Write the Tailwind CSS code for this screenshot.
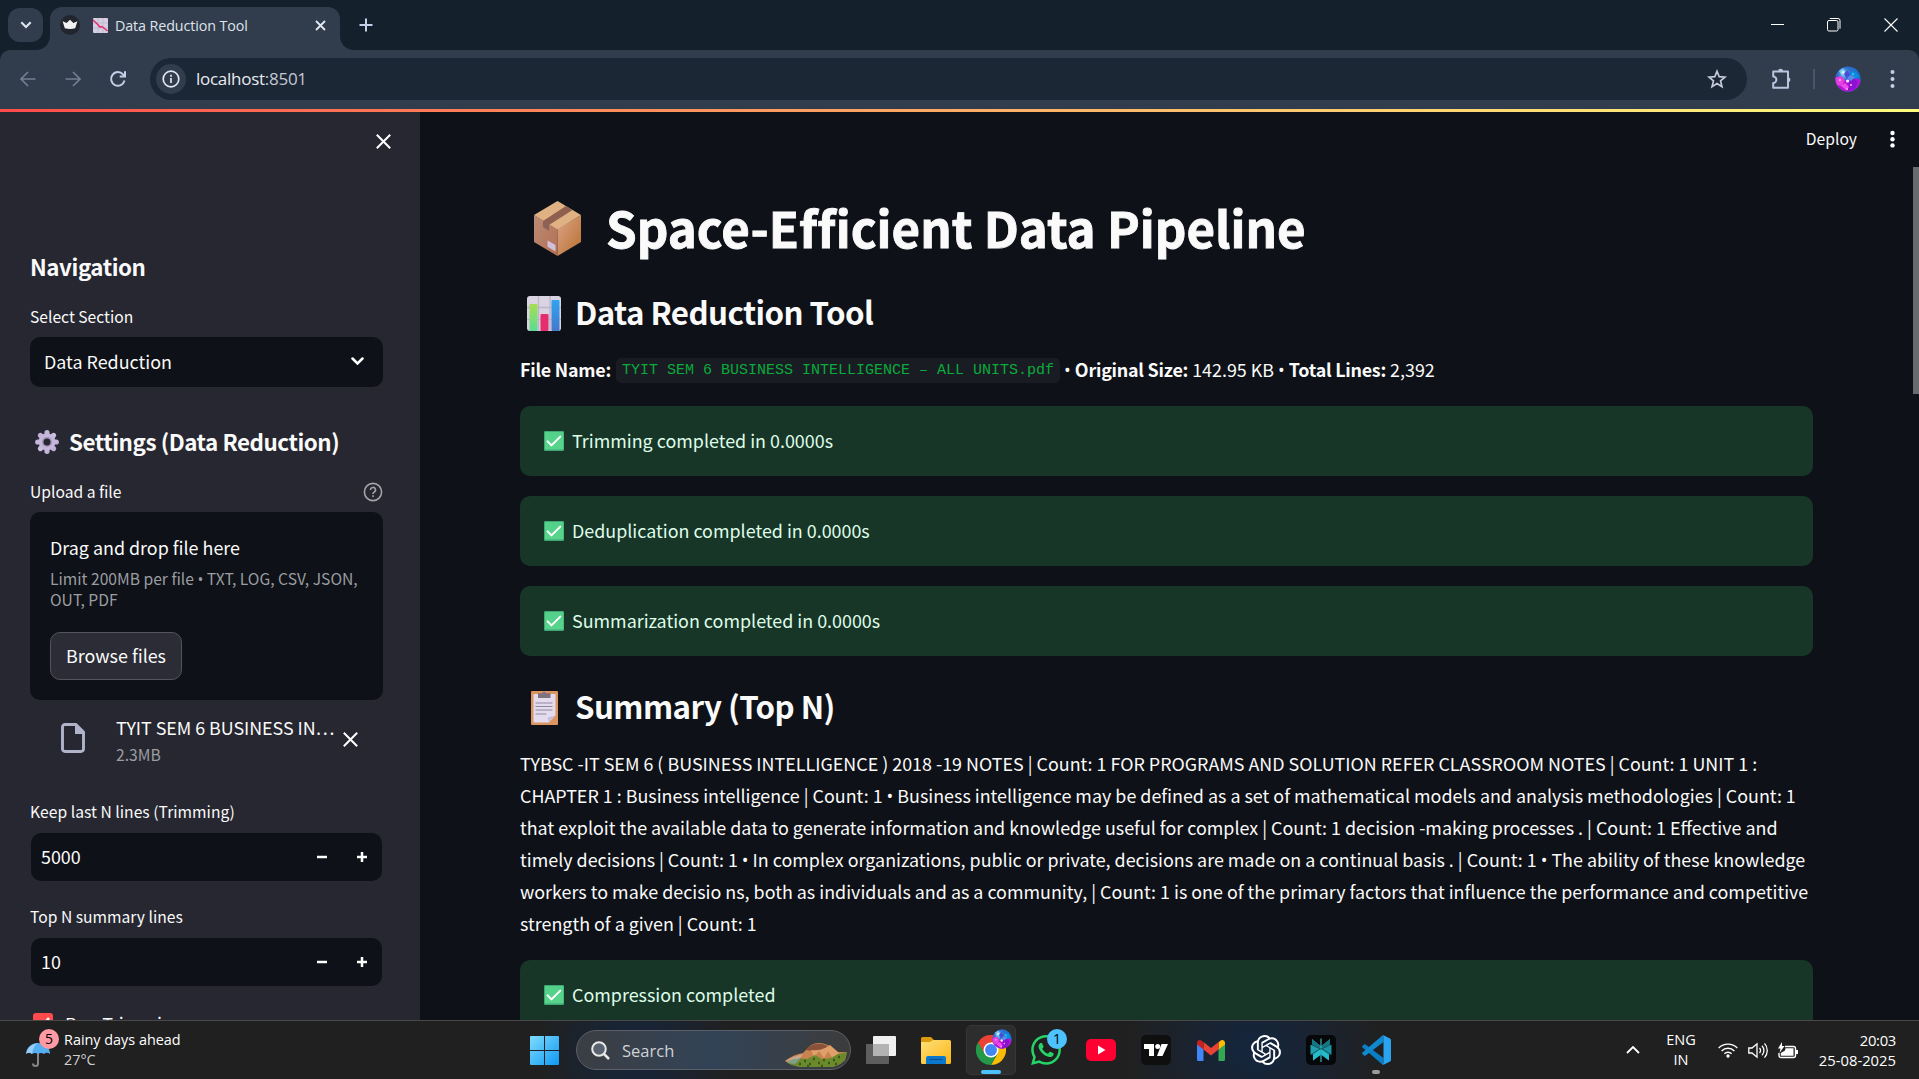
<!DOCTYPE html>
<html lang="en">
<head>
<meta charset="utf-8">
<title>Data Reduction Tool</title>
<script src="https://cdn.jsdelivr.net/npm/@tailwindcss/browser@4"></script>
</head>
<body class="w-[1919px] h-[1079px] overflow-hidden bg-[#0e1117] text-[#fafafa] font-['Noto_Sans_CJK_SC',sans-serif] flex flex-col">

<svg class="absolute w-0 h-0" aria-hidden="true">
  <defs>
    <linearGradient id="chk" x1="0" y1="0" x2="0" y2="1"><stop offset="0" stop-color="#52d08a"/><stop offset="1" stop-color="#5ad48c"/></linearGradient>
    <symbol id="check" viewBox="0 0 20 20"><rect width="20" height="20" rx="1.2" fill="#3fa876"/><rect x="1" y="1" width="18.4" height="17.6" rx=".6" fill="url(#chk)"/><path d="M3.6 10.4l3.9 4L16.3 5.6" fill="none" stroke="#fff" stroke-width="2" stroke-linecap="round" stroke-linejoin="round"/></symbol>
    <radialGradient id="avA" cx=".35" cy=".3" r=".8"><stop offset="0" stop-color="#8fd0f5"/><stop offset=".3" stop-color="#2f6fd0"/><stop offset="1" stop-color="#0a6fc8"/></radialGradient>
    <symbol id="avatar" viewBox="0 0 26 26"><clipPath id="avc"><circle cx="13" cy="13" r="12.6"/></clipPath><g clip-path="url(#avc)"><rect width="26" height="26" fill="url(#avA)"/><path d="M0 10L8 13 13 16 20 12 26 14V26H0Z" fill="#b414d8"/><path d="M0 12L6 10 10 14 7 20 2 19Z" fill="#e63fe0"/><path d="M14 15l5-3 4 4-3 7-7 2Z" fill="#8a12d0"/><path d="M16 5l5 1 3 5-5 2-4-3Z" fill="#0a8fe0"/><path d="M4 5l4-3 3 4-4 4Z" fill="#7cc8ee"/><path d="M9 8l3-4 3 4-3 5Z" fill="#4a4ad8"/><path d="M12 12l4-3 4 2-4 4Z" fill="#5a8ae8"/><path d="M6 20l4-3 4 4-3 3Z" fill="#f04ae8"/><circle cx="12.6" cy="15" r="1.6" fill="#ffe0fa"/><circle cx="8" cy="6.5" r="1.4" fill="#d8f2ff"/><circle cx="16" cy="19" r="1" fill="#ffb0f5"/><circle cx="5" cy="14" r=".9" fill="#ffc0f8"/><circle cx="12" cy="23" r="1.1" fill="#ff9af0"/><circle cx="18" cy="8" r=".8" fill="#9ae0ff"/></g></symbol>
  </defs>
</svg>

<!-- Browser tab strip -->
<header class="h-[109px] shrink-0 bg-[#15202d] flex flex-col font-['Open_Sans',sans-serif]">
  <div class="h-[50px] flex items-start">
    <div class="ml-2 mt-2 w-[35px] h-[34px] rounded-[12px] bg-[#313c4c] flex items-center justify-center">
      <svg width="12" height="8" viewBox="0 0 12 8" fill="none" stroke="#dfe5f0" stroke-width="2.1"><path d="M1.3 1.3L6 6l4.700-4.700"/></svg>
    </div>
    <div class="mt-[7px] flex items-end h-[43px]">
      <svg class="-ml-[7px]" width="14" height="14" viewBox="0 0 14 14" fill="#313c4c"><path d="M14 14H0A14 14 0 0 0 14 0Z"/></svg>
      <div class="w-[290px] h-[43px] rounded-t-[12px] bg-[#313c4c] flex items-center pb-[7px] pl-[10px] pr-[14px]">
        <svg width="20" height="20" viewBox="0 0 20 20"><circle cx="10" cy="10" r="10" fill="#23252e"/><path d="M2.600 6.200l4 1.900L10 4.700l3.400 3.400 4-1.900-2.200 7.100q-5.200 1.300-10.400 0Z" fill="#f2f2f2"/></svg>
        <svg class="ml-[13px]" width="15" height="15" viewBox="0 0 15 15"><rect width="15" height="15" rx="1" fill="#d6cfe2"/><path d="M5 0V15M10 0V15M0 5H15M0 10H15" stroke="#b9b1ca" stroke-width=".7"/><path d="M0 2l4.500 4.200L7 9l2-.5 2.500 2L14.500 13" fill="none" stroke="#e5306d" stroke-width="1.600"/></svg>
        <span class="ml-[7px] mt-px text-[14.300px] leading-5 tracking-[-0.11px] text-[#dfe3ea] whitespace-nowrap">Data Reduction Tool</span>
        <svg class="ml-auto" width="11" height="11" viewBox="0 0 11 11" stroke="#e3e7ef" stroke-width="1.800"><path d="M1 1l9 9M10 1l-9 9"/></svg>
      </div>
      <svg width="14" height="14" viewBox="0 0 14 14" fill="#313c4c"><path d="M0 14H14A14 14 0 0 1 0 0Z"/></svg>
    </div>
    <svg class="ml-[5px] mt-[18px]" width="14" height="14" viewBox="0 0 14 14" stroke="#c5d0e8" stroke-width="2"><path d="M7 .5v13M.5 7h13"/></svg>
    <div class="ml-auto mr-[21px] mt-[18px] flex items-center gap-[43px]">
      <svg width="13" height="14" viewBox="0 0 13 14"><path d="M0 6.500h13" stroke="#fff" stroke-width="1"/></svg>
      <svg width="14" height="14" viewBox="0 0 14 14" fill="none" stroke="#fff" stroke-width="1"><rect x=".5" y="2.500" width="10.500" height="10.500" rx="1.500"/><path d="M2.800.5H11a2 2 0 0 1 2 2v8.200"/></svg>
      <svg width="14" height="14" viewBox="0 0 14 14" stroke="#fff" stroke-width="1.100"><path d="M.5.5l13 13M13.500.5l-13 13"/></svg>
    </div>
  </div>

  <!-- Toolbar -->
  <div class="h-[59px] bg-[#313c4c] rounded-t-[10px] flex items-center pl-5 pb-px">
    <svg width="16" height="16" viewBox="0 0 16 16" fill="none" stroke="#737e90" stroke-width="1.700"><path d="M15.500 8H1.500M8 1L1 8l7 7"/></svg>
    <svg class="ml-[29px]" width="16" height="16" viewBox="0 0 16 16" fill="none" stroke="#737e90" stroke-width="1.700"><path d="M.5 8h14M8 1l7 7-7 7"/></svg>
    <svg class="ml-[28px]" width="18" height="18" viewBox="0 0 18 18" fill="none" stroke="#c5d0e8" stroke-width="2"><path d="M15.500 10.500A6.800 6.800 0 1 1 14 4.400l2 2"/><path d="M16 1.200v5.300h-5.300"/></svg>
    <div class="ml-[23px] w-[1597px] h-[42px] rounded-full bg-[#1c2736] flex items-center pl-[6px] pr-[20px]">
      <div class="size-[30px] rounded-full bg-[#313c4c] flex items-center justify-center">
        <svg width="18" height="18" viewBox="0 0 18 18" fill="none" stroke="#e3e7f0" stroke-width="1.700"><circle cx="9" cy="9" r="7.800"/><path d="M9 8v5M9 4.800v1.900"/></svg>
      </div>
      <span class="ml-[10px] text-[17px] leading-6 tracking-[-0.27px] text-[#e8ebf0] whitespace-nowrap">localhost<span class="text-[#c3c9d3]">:8501</span></span>
      <svg class="ml-auto" width="20" height="20" viewBox="0 0 20 20" fill="none" stroke="#c7ccd8" stroke-width="1.700"><path d="M10 2.300l2.200 5.400 5.800.45-4.450 3.750 1.400 5.700L10 14.500l-4.950 3.100 1.400-5.700L2 8.150l5.800-.45Z"/></svg>
    </div>
    <svg class="ml-[24px]" width="22" height="22" viewBox="0 0 22 22" fill="none" stroke="#b9c5de" stroke-width="2"><path d="M2.200 3.500H17V19.800H2.200V15a3.200 3.200 0 0 0 0-6.400Z" stroke-linejoin="round"/><path d="M7 3.300a2.600 2.600 0 0 1 5.200 0ZM17 9.200a2.500 2.500 0 0 1 0 5Z" fill="#b9c5de" stroke="none"/></svg>
    <div class="ml-[20px] w-[2px] h-5 bg-[#4a5568]"></div>
    <svg class="ml-5" width="26" height="26"><use href="#avatar"/></svg>
    <svg class="ml-[29px]" width="5" height="18" viewBox="0 0 5 18" fill="#c5d0e8"><circle cx="2.500" cy="2" r="2"/><circle cx="2.500" cy="9" r="2"/><circle cx="2.500" cy="16" r="2"/></svg>
  </div>
</header>

<div class="h-[3px] shrink-0 bg-linear-to-r from-[#ff4b4b] to-[#fffd80]"></div>

<div class="h-[908px] shrink-0 flex overflow-hidden relative">
  <!-- Sidebar -->
  <aside class="w-[420px] shrink-0 h-full bg-[#262730] flex flex-col overflow-hidden px-[30px] [&>*]:shrink-0">
    <div class="h-[58px] flex items-center justify-end -mr-px">
      <svg width="15" height="15" viewBox="0 0 15 15" stroke="#fff" stroke-width="2"><path d="M.8.8l13.400 13.400M14.200.8L.8 14.200"/></svg>
    </div>
    <h2 class="mt-[81px] h-[30px] leading-[30px] text-[22.400px] font-bold tracking-[-0.45px]">Navigation</h2>
    <div class="mt-[24px] h-6 leading-6 text-[15.650px]">Select Section</div>
    <div class="mt-[8px] w-[353px] h-[50px] rounded-[10px] bg-[#0e1117] flex items-center pl-[14px] pr-[19px] pb-[2px] text-[17.900px]">
      <span>Data Reduction</span>
      <svg class="ml-auto" width="13" height="9" viewBox="0 0 13 9" fill="none" stroke="#fff" stroke-width="2.500" stroke-linecap="round"><path d="M1.500 1.500l5 5 5-5"/></svg>
    </div>
    <h2 class="mt-[39px] h-[30px] leading-[30px] text-[22.400px] font-bold flex items-center pl-[5px] tracking-[-0.45px] whitespace-nowrap">
      <svg class="mr-[10px] mt-[2px]" width="24" height="24" viewBox="0 0 24 24"><defs><linearGradient id="gr" gradientUnits="userSpaceOnUse" x1="0" y1="0" x2="24" y2="24"><stop offset="0" stop-color="#b9a6cc"/><stop offset=".5" stop-color="#cdbfe0"/><stop offset="1" stop-color="#b5a4d2"/></linearGradient></defs><g stroke="url(#gr)" stroke-width="5.200" stroke-linecap="round"><path d="M12 2.700V21.299M2.700 12H21.300M5.400 5.400l13.200 13.200M18.600 5.400L5.400 18.600"/></g><circle cx="12" cy="12" r="8.400" fill="#c5b6da"/><circle cx="12" cy="12" r="5" fill="#a493b8"/><circle cx="12" cy="12" r="3.500" fill="#262730"/></svg>
      <span>Settings (Data Reduction)</span>
    </h2>
    <div class="mt-6 w-[353px] h-6 leading-6 text-[15.650px] flex items-center justify-between">
      <span>Upload a file</span>
      <svg width="20" height="20" viewBox="0 0 20 20" fill="none" stroke="#a3a4a8" stroke-width="1.600"><circle cx="10" cy="10" r="8.600"/><path d="M7.500 7.900a2.500 2.500 0 1 1 3.700 2.200c-.8.5-1.200.9-1.200 1.800M10 13.300v1.700"/></svg>
    </div>
    <div class="mt-2 w-[353px] h-[188px] rounded-[10px] bg-[#0e1117] pt-[23px] px-5">
      <div class="h-6 leading-6 text-[17.900px]">Drag and drop file here</div>
      <div class="mt-[9px] leading-[21px] text-[15.650px] text-[#9b9da1] whitespace-nowrap">Limit 200MB per file <span class="font-['Open_Sans'] leading-none">•</span> TXT, LOG, CSV, JSON,<br>OUT, PDF</div>
      <button class="mt-[22px] w-[132px] h-[48px] rounded-[10px] border border-[#52535b] bg-[#2b2c36] text-[17.900px] leading-6 whitespace-nowrap flex items-center justify-center pb-[2px]">Browse files</button>
    </div>
    <div class="mt-[15px] h-[52px] flex items-start pl-[31px]">
      <svg class="mt-2" width="24" height="30" viewBox="0 0 24 30" fill="none"><path d="M14.500 1.500H4a2.500 2.500 0 0 0-2.500 2.500V26A2.500 2.500 0 0 0 4 28.500H20A2.500 2.500 0 0 0 22.500 26V9.500" stroke="#b0b3c9" stroke-width="2.900"/><path d="M14 0h1.500L24 8.500V11H14Z" fill="#b0b3c9"/></svg>
      <div class="ml-[31px] w-[222px] whitespace-nowrap">
        <div class="h-6 leading-6 text-[17.900px] tracking-[-0.05px]">TYIT SEM 6 BUSINESS IN…</div>
        <div class="mt-[4px] h-6 leading-6 text-[15.650px] text-[#9b9da1]">2.3MB</div>
      </div>
      <svg class="ml-[5px] mt-[17px]" width="15" height="15" viewBox="0 0 15 15" stroke="#fff" stroke-width="2"><path d="M.8.8l13.400 13.400M14.200.8L.8 14.200"/></svg>
    </div>
    <div class="mt-[33px] h-6 leading-6 text-[15.650px] tracking-[0.03px]">Keep last N lines (Trimming)</div>
    <div class="mt-[9px] ml-px w-[351px] h-[48px] rounded-[10px] bg-[#0e1117] flex items-center pl-[10px] pr-[15px] text-[17.900px]">
      <span class="-mt-[2px]">5000</span>
      <svg class="ml-auto" width="10" height="10" viewBox="0 0 10 10"><path d="M0 5h10" stroke="#fff" stroke-width="2.500"/></svg>
      <svg class="ml-[30px]" width="10" height="10" viewBox="0 0 10 10"><path d="M0 5h10M5 0v10" stroke="#fff" stroke-width="2.500"/></svg>
    </div>
    <div class="mt-6 h-6 leading-6 text-[15.650px]">Top N summary lines</div>
    <div class="mt-[9px] ml-px w-[351px] h-[48px] rounded-[10px] bg-[#0e1117] flex items-center pl-[10px] pr-[15px] text-[17.900px]">
      <span class="-mt-[2px]">10</span>
      <svg class="ml-auto" width="10" height="10" viewBox="0 0 10 10"><path d="M0 5h10" stroke="#fff" stroke-width="2.500"/></svg>
      <svg class="ml-[30px]" width="10" height="10" viewBox="0 0 10 10"><path d="M0 5h10M5 0v10" stroke="#fff" stroke-width="2.500"/></svg>
    </div>
    <div class="mt-[27px] h-5 flex items-center pl-[3px] text-[17.900px]">
      <div class="size-5 rounded-[3px] bg-[#ff4b4b] flex items-center justify-center"><svg width="14" height="12" viewBox="0 0 14 12" fill="none" stroke="#fff" stroke-width="2.500"><path d="M1 6l4 4L13 1"/></svg></div>
      <span class="ml-3">Run Trimming</span>
    </div>
  </aside>

  <!-- Main -->
  <main class="flex-1 h-full overflow-hidden flex flex-col [&>*]:shrink-0">
    <div class="h-[55px] flex items-center justify-end pr-[24px] pb-px">
      <span class="text-[15.650px] leading-6">Deploy</span>
      <svg class="ml-[33px]" width="5" height="18" viewBox="0 0 5 18" fill="#fff"><circle cx="2.500" cy="3" r="2.200"/><circle cx="2.500" cy="9.200" r="2.200"/><circle cx="2.500" cy="15.400" r="2.200"/></svg>
    </div>
    <div class="pl-[100px] w-[1393px] flex flex-col [&>*]:shrink-0">
      <h1 class="mt-[30px] h-[60px] pl-[14px] flex items-center text-[49.200px] leading-[60px] font-bold whitespace-nowrap">
        <svg class="mr-[25px] mt-[3px]" width="47" height="55" viewBox="0 0 47 55"><defs><linearGradient id="bxl" x1="0" y1="0" x2="1" y2="1"><stop offset="0" stop-color="#b98c76"/><stop offset="1" stop-color="#b66f52"/></linearGradient><linearGradient id="bxr" x1="0" y1="0" x2="1" y2="1"><stop offset="0" stop-color="#dca488"/><stop offset="1" stop-color="#b87030"/></linearGradient></defs><path d="M0 14L23.500 28V55L0 41Z" fill="url(#bxl)"/><path d="M47 14L23.500 28V55L47 41Z" fill="url(#bxr)"/><path d="M23.500 0L47 14 23.500 28.500 0 14Z" fill="#dfb183"/><path d="M32 5L38.500 9 15 24 9 20Z" fill="#8f604f"/><path d="M9 20l6 3.700v6L9 26Z" fill="#8b6258"/><path d="M13.500 39.500l8 4.500v6.500l-8-4.700Z" fill="#cfc0dc"/></svg>
        <span class="[-webkit-text-stroke:0.9px_#fafafa] tracking-[0.03px]">Space-Efficient Data Pipeline</span>
      </h1>
      <h2 class="mt-[34px] h-[42px] pl-[7px] flex items-center text-[31.300px] leading-[42px] font-bold tracking-[-0.57px] whitespace-nowrap">
        <svg class="mr-[14px] mt-[2px]" width="34" height="35" viewBox="0 0 34 35"><defs><linearGradient id="b1" x1="0" y1="0" x2="0" y2="1"><stop offset="0" stop-color="#a6dd54"/><stop offset="1" stop-color="#5bdc92"/></linearGradient><linearGradient id="b3" x1="0" y1="0" x2="0" y2="1"><stop offset="0" stop-color="#30a4f2"/><stop offset="1" stop-color="#4478cc"/></linearGradient></defs><rect width="34" height="35" rx="3" fill="#d9d3e2"/><path d="M11.500 0V35M23 0V35M0 11.500H34M0 23.500H34" stroke="#bdb7c8" stroke-width="1.400"/><rect x="2.500" y="8" width="8" height="27" rx="1" fill="url(#b1)"/><rect x="13.500" y="18" width="8" height="17" rx="1" fill="#e62e6e"/><rect x="24.500" y="4" width="8" height="31" rx="1" fill="url(#b3)"/></svg>
        <span>Data Reduction Tool</span>
      </h2>
      <p class="mt-[20px] h-8 leading-8 text-[17.900px] whitespace-nowrap flex items-center"><b class="font-bold tracking-[-0.24px]">File Name:</b><code class="ml-[5px] mt-[3px] h-[25px] leading-[25px] px-[6px] rounded-[5px] bg-[#1a1c24] text-[#09ab3b] text-[15px] font-['Liberation_Mono',monospace]">TYIT SEM 6 BUSINESS INTELLIGENCE – ALL UNITS.pdf</code><span class="ml-1"><span class="font-['Open_Sans'] leading-none">•</span> <b class="font-bold tracking-[-0.24px]">Original Size:</b> 142.95 KB <span class="font-['Open_Sans'] leading-none">•</span> <b class="font-bold tracking-[-0.24px]">Total Lines:</b> 2,392</span></p>
      <div class="mt-[21px] flex flex-col gap-5 text-[17.900px] text-[#dffde9]">
        <div class="h-[70px] rounded-[10px] bg-[#183627] flex items-center pl-6"><svg class="mr-2" width="20" height="20"><use href="#check"/></svg><span class="-mt-[2px]">Trimming completed in 0.0000s</span></div>
        <div class="h-[70px] rounded-[10px] bg-[#183627] flex items-center pl-6"><svg class="mr-2" width="20" height="20"><use href="#check"/></svg><span class="-mt-[2px]">Deduplication completed in 0.0000s</span></div>
        <div class="h-[70px] rounded-[10px] bg-[#183627] flex items-center pl-6"><svg class="mr-2" width="20" height="20"><use href="#check"/></svg><span class="-mt-[2px]">Summarization completed in 0.0000s</span></div>
      </div>
      <h2 class="mt-[29px] h-[42px] pl-[11px] flex items-center text-[31.300px] leading-[42px] font-bold tracking-[-0.57px] whitespace-nowrap">
        <svg class="mr-[17px] mt-[2px]" width="27" height="35" viewBox="0 0 27 35"><rect y="1" width="27" height="34" rx="1" fill="#dc955f"/><path d="M2.500 4H24.500V25L18 32.500H2.500Z" fill="#e3dcee"/><path d="M24.500 25.500L18 32.500 16.500 27.500Z" fill="#c9bdd8"/><path d="M7 3.200h4.300a2 2 0 0 1 3.800 0H19.500V8H7Z" fill="#82727d"/><path d="M4.500 13h17M4.500 16.500h17M4.500 20h17M4.500 24h11" stroke="#94889f" stroke-width="1.100"/></svg>
        <span>Summary (Top N)</span>
      </h2>
      <p class="mt-[20px] h-[192px] leading-8 text-[17.900px] whitespace-nowrap">TYBSC -IT SEM 6 ( BUSINESS INTELLIGENCE ) 2018 -19 NOTES | Count: 1 FOR PROGRAMS AND SOLUTION REFER CLASSROOM NOTES | Count: 1 UNIT 1 :<br>CHAPTER 1 : Business intelligence | Count: 1 <span class="font-['Open_Sans'] leading-none">•</span> Business intelligence may be defined as a set of mathematical models and analysis methodologies | Count: 1<br>that exploit the available data to generate information and knowledge useful for complex | Count: 1 decision -making processes . | Count: 1 Effective and<br>timely decisions | Count: 1 <span class="font-['Open_Sans'] leading-none">•</span> In complex organizations, public or private, decisions are made on a continual basis . | Count: 1 <span class="font-['Open_Sans'] leading-none">•</span> The ability of these knowledge<br>workers to make decisio ns, both as individuals and as a community, | Count: 1 is one of the primary factors that influence the performance and competitive<br>strength of a given | Count: 1</p>
      <div class="mt-[21px] h-[70px] rounded-[10px] bg-[#183627] flex items-center pl-6 text-[17.900px] text-[#dffde9]"><svg class="mr-2" width="20" height="20"><use href="#check"/></svg><span class="-mt-[2px]">Compression completed</span></div>
    </div>
  </main>
  <div class="absolute right-0 top-[55px] w-[6px] h-[227px] bg-[#6a6b6f]"></div>
</div>

<!-- Taskbar -->
<footer class="h-[59px] shrink-0 border-t border-[#484848] flex items-center font-['Open_Sans',sans-serif] text-white bg-[radial-gradient(ellipse_100px_90px_at_635px_30px,#15263d,transparent),radial-gradient(ellipse_130px_110px_at_1255px_30px,#14263f,transparent)] bg-[#202020]">
  <div class="w-[520px] flex items-center pl-[26px]">
    <div class="relative w-[34px] h-[38px]">
      <svg class="absolute left-0 top-[11px]" width="24" height="25" viewBox="0 0 24 25"><path d="M12 9V21.500a2.500 2.500 0 0 1-5 0" fill="none" stroke="#8a8584" stroke-width="2"/><path d="M0 12A12 11 0 0 1 24 12Q21 9.500 18 12 15 10 12 12 9 10 6 12 3 9.500 0 12Z" fill="#55aef0"/><path d="M6 12Q7 4 12 1 6 2 2.500 6L0 12Q3 9.500 6 12Z" fill="#9ccdf8"/></svg>
      <div class="absolute left-[13px] -top-[2px] size-5 rounded-full bg-[#ff99a4] text-black text-[14px] leading-5 text-center">5</div>
    </div>
    <div class="ml-1 text-[14.400px] leading-5 whitespace-nowrap"><div>Rainy days ahead</div><div class="text-[#cfcfcf]">27°C</div></div>
  </div>

  <div class="flex items-center h-[50px]">
    <div class="w-[50px] flex justify-center pr-px">
      <svg width="29" height="29" viewBox="0 0 29 29"><defs><linearGradient id="wn" x1="0" y1="0" x2="29" y2="29" gradientUnits="userSpaceOnUse"><stop offset="0" stop-color="#7fdcfb"/><stop offset="1" stop-color="#0f98f5"/></linearGradient></defs><path d="M0 1a1 1 0 0 1 1-1H14V14H0ZM15 0H28a1 1 0 0 1 1 1V14H15ZM0 15H14V29H1a1 1 0 0 1-1-1ZM15 15H29V28a1 1 0 0 1-1 1H15Z" fill="url(#wn)"/></svg>
    </div>
    <div class="ml-[6px] w-[275px] h-[40px] rounded-full border border-[#5a5f68] bg-linear-to-r from-[#3b3e43] via-[#324357] to-[#3c3c3c] flex items-center pl-[14px] pr-[3px]">
      <svg width="19" height="19" viewBox="0 0 19 19" fill="none" stroke="#e8e8e8" stroke-width="2"><circle cx="8" cy="8" r="6.800" fill="#59636f"/><path d="M13 13l5 5" stroke-width="2.500"/></svg>
      <span class="ml-[12px] mt-px text-[16.500px] leading-6 text-[#cfd2d6]">Search</span>
      <svg class="ml-auto mt-[9px]" width="62" height="26" viewBox="0 0 62 26"><path d="M0 19Q9 12 18 11L26 3Q33-1 43 3L53 10H62L60 18Q53 25 45 25H17Q6 24 0 19Z" fill="#c98350"/><path d="M23 5Q32-1 43 4L40 8Q30 10 21 8Z" fill="#8a5238"/><path d="M26 8Q34 9 40 6L45 3 54 11 48 17 43 9 39 16 34 9 29 15Z" fill="#e0a06a"/><path d="M0 19Q9 14 18 12L14 18Z" fill="#c9a890"/><path d="M3 21Q12 15 22 17L30 13 37 17 46 16 53 12 62 10 60 18Q53 25 45 25H17Q8 24 3 21Z" fill="#6c8a2c"/><path d="M2 20Q8 16 15 17L10 22Q5 22 2 20Z" fill="#7fa088"/><path d="M14 22h2M19 19h2M24 22h2M28 17h2M33 21h2M38 18h2M43 21h2M48 18h2M53 15h2M36 24h2M22 24h2M50 22h2" stroke="#37591b" stroke-width="2.500"/></svg>
    </div>
  </div>
  <div class="ml-[5px] flex items-center gap-[5px] h-[50px]">
    <div class="w-[50px] flex justify-center"><svg width="30" height="28" viewBox="0 0 30 28"><rect y="8" width="23" height="20" rx="1" fill="#5e5e5e"/><rect x="7" width="23" height="20" rx="1" fill="#f0f0f0"/><rect x="7" y="8" width="16" height="12" fill="#b3b3b3"/></svg></div>
    <div class="w-[50px] flex justify-center"><svg width="30" height="27" viewBox="0 0 30 27"><defs><linearGradient id="fd" x1="0" y1="0" x2="1" y2="1"><stop offset="0" stop-color="#ffe07a"/><stop offset="1" stop-color="#fbb614"/></linearGradient></defs><path d="M0 1.500A1.500 1.500 0 0 1 1.500 0H10l3 3H28V10H0Z" fill="#dd9a0c"/><path d="M0 5H9l3-2H28.500A1.500 1.500 0 0 1 30 4.500V25.500A1.500 1.500 0 0 1 28.500 27H1.500A1.500 1.500 0 0 1 0 25.500Z" fill="url(#fd)"/><path d="M5 27V21a2 2 0 0 1 2-2H23a2 2 0 0 1 2 2v6Z" fill="#0b78cf"/><path d="M8.500 22.500h13" stroke="#0a4f90" stroke-width="1.200"/></svg></div>
    <div class="relative w-[50px] h-[50px] rounded-[5px] bg-[#2d2d2d] border border-[#363636] flex items-center justify-center">
      <svg width="30" height="30" viewBox="0 0 48 48"><path d="M24 24L3.200 12A24 24 0 0 1 44.800 12Z" fill="#ea4335"/><path d="M24 0A24 24 0 0 1 44.800 12H24Z" fill="#ea4335"/><path d="M44.800 12A24 24 0 0 1 24 48L34.400 30 24 12Z" fill="#fbbc05"/><path d="M3.200 12A24 24 0 0 0 24 48L34.400 30 13.600 30Z" fill="#249a49"/><path d="M24 12H44.800L34.400 30Z" fill="#fbbc05"/><path d="M3.200 12L13.600 30 24 12Z" fill="#ea4335"/><path d="M3.200 12A24 24 0 0 0 10 43L16 33 13.600 30Z" fill="#249a49"/><circle cx="24" cy="24" r="12" fill="#fff"/><circle cx="24" cy="24" r="9.500" fill="#4285f4"/></svg>
      <svg class="absolute left-[25px] top-[3px]" width="20" height="20"><use href="#avatar"/></svg>
      <div class="absolute left-[14px] top-[44px] w-5 h-1 rounded-full bg-[#4cc2ff]"></div>
    </div>
    <div class="relative w-[50px] flex justify-center">
      <svg width="30" height="30" viewBox="0 0 24 24" fill="#25d366"><path d="M17.472 14.382c-.297-.149-1.758-.867-2.030-.967-.273-.099-.471-.148-.67.15-.197.297-.767.966-.94 1.164-.173.199-.347.223-.644.075-.297-.15-1.255-.463-2.390-1.475-.883-.788-1.480-1.761-1.653-2.059-.173-.297-.018-.458.13-.606.134-.133.298-.347.446-.52.149-.174.198-.298.298-.497.099-.198.05-.371-.025-.52-.075-.149-.669-1.612-.916-2.207-.242-.579-.487-.5-.669-.51-.173-.008-.371-.01-.57-.01-.198 0-.52.074-.792.372-.272.297-1.040 1.016-1.040 2.479 0 1.462 1.065 2.875 1.213 3.074.149.198 2.096 3.200 5.077 4.487.709.306 1.262.489 1.694.625.712.227 1.360.195 1.871.118.571-.085 1.758-.719 2.006-1.413.248-.694.248-1.289.173-1.413-.074-.124-.272-.198-.57-.347m-5.421 7.403h-.004a9.870 9.870 0 0 1-5.031-1.378l-.361-.214-3.741.982.998-3.648-.235-.374a9.860 9.860 0 0 1-1.510-5.260c.001-5.450 4.436-9.884 9.888-9.884 2.640 0 5.122 1.030 6.988 2.898a9.825 9.825 0 0 1 2.893 6.994c-.003 5.450-4.437 9.884-9.885 9.884m8.413-18.297A11.815 11.815 0 0 0 12.050 0C5.495 0 .16 5.335.157 11.892c0 2.096.547 4.142 1.588 5.945L.057 24l6.305-1.654a11.882 11.882 0 0 0 5.683 1.448h.005c6.554 0 11.890-5.335 11.893-11.893a11.821 11.821 0 0 0-3.480-8.413z"/></svg>
      <div class="absolute left-[26px] -top-[6px] size-5 rounded-full bg-[#4cc2ff] text-black text-[14px] leading-5 text-center">1</div>
    </div>
    <div class="w-[50px] flex justify-center"><svg width="30" height="22" viewBox="0 0 30 22"><rect width="30" height="22" rx="5" fill="#ff0033"/><path d="M12 6.500l7.500 4.500-7.500 4.500Z" fill="#fff"/></svg></div>
    <div class="w-[50px] flex justify-center"><svg width="30" height="30" viewBox="0 0 30 30"><rect width="30" height="30" rx="5" fill="#0f0f0f"/><path d="M3 9H13V21H8V14H3ZM20.500 9H27L21.500 21H16Z" fill="#fff"/><circle cx="16.700" cy="11.500" r="2.500" fill="#fff"/></svg></div>
    <div class="w-[50px] flex justify-center"><svg width="28" height="21" viewBox="0 0 28 21"><path d="M0 3V19.500A1.500 1.500 0 0 0 1.500 21H6.500V8Z" fill="#4285f4"/><path d="M28 3V19.500A1.500 1.500 0 0 1 26.500 21H21.500V8Z" fill="#34a853"/><path d="M21.500 2.500V9.500L28 4.500V3C28 .2 25-.8 23 .9Z" fill="#fbbc04"/><path d="M6.500 9.500V2L14 8l7.500-6V9.500L14 15.500Z" fill="#ea4335"/><path d="M0 3V4.500L6.500 9.500V2.500L5 .9C3-.8 0 .2 0 3Z" fill="#c5221f"/></svg></div>
    <div class="w-[50px] flex justify-center"><svg width="30" height="30" viewBox="0 0 24 24" fill="#fff"><path d="M22.2819 9.8211a5.9847 5.9847 0 0 0-.5157-4.9108 6.0462 6.0462 0 0 0-6.5098-2.900A6.0651 6.0651 0 0 0 4.9807 4.1818a5.9847 5.9847 0 0 0-3.9977 2.900 6.0462 6.0462 0 0 0 .7427 7.0966 5.980 5.980 0 0 0 .511 4.9107 6.051 6.051 0 0 0 6.5146 2.9001A5.9847 5.9847 0 0 0 13.2599 24a6.0557 6.0557 0 0 0 5.7718-4.2058 5.9894 5.9894 0 0 0 3.9977-2.9001 6.0557 6.0557 0 0 0-.7475-7.0729zm-9.022 12.6081a4.4755 4.4755 0 0 1-2.8764-1.0408l.1419-.0804 4.7783-2.7582a.7948.7948 0 0 0 .3927-.6813v-6.7369l2.020 1.1686a.071.071 0 0 1 .038.052v5.5826a4.504 4.504 0 0 1-4.4945 4.4944zm-9.6607-4.1254a4.4708 4.4708 0 0 1-.5346-3.0137l.142.0852 4.783 2.7582a.7712.7712 0 0 0 .7806 0l5.8428-3.3685v2.3324a.0804.0804 0 0 1-.0332.0615L9.740 19.9502a4.4992 4.4992 0 0 1-6.1408-1.6464zM2.3408 7.8956a4.485 4.485 0 0 1 2.3655-1.9728V11.600a.7664.7664 0 0 0 .3879.6765l5.8144 3.3543-2.0201 1.1685a.0757.0757 0 0 1-.071 0l-4.8303-2.7865A4.504 4.504 0 0 1 2.3408 7.872zm16.5963 3.8558L13.1038 8.364 15.1192 7.200a.0757.0757 0 0 1 .071 0l4.8303 2.7913a4.4944 4.4944 0 0 1-.6765 8.1042v-5.6772a.79.79 0 0 0-.407-.667zm2.0107-3.0231l-.142-.0852-4.7735-2.7818a.7759.7759 0 0 0-.7854 0L9.409 9.2297V6.8974a.0662.0662 0 0 1 .0284-.0615l4.8303-2.7866a4.4992 4.4992 0 0 1 6.6802 4.660zM8.3065 12.863l-2.020-1.1638a.0804.0804 0 0 1-.038-.0567V6.0742a4.4992 4.4992 0 0 1 7.3757-3.4537l-.142.0805L8.704 5.459a.7948.7948 0 0 0-.3927.6813zm1.0976-2.3654l2.602-1.4998 2.6069 1.4998v2.9994l-2.5974 1.4997-2.6067-1.4997Z"/></svg></div>
    <div class="w-[50px] flex justify-center"><svg width="30" height="30" viewBox="0 0 30 30"><rect width="30" height="30" rx="5" fill="#050708"/><path d="M6 4L14.600 11V19.500L7 25.500V19.500H4.500V10H6Z" fill="#20a2b0"/><path d="M24 4L15.400 11V19.500L23 25.500V19.500H25.500V10H24Z" fill="#1a93a2"/><path d="M6 4L14.500 11V14L6 10ZM24 4L15.500 11V14L24 10Z" fill="#167684"/><path d="M7 25.500V20L14.500 14.500V20ZM23 25.500V20L15.500 14.500V20Z" fill="#25bccb"/><path d="M15 3.500V27" stroke="#39c6d2" stroke-width="1.100"/><path d="M14.500 13.500L5 19.500M15.500 13.500L25 19.500M14.500 14L6 10M15.500 14L24 10" stroke="#0b4a54" stroke-width=".8"/></svg></div>
    <div class="relative w-[50px] h-[50px] flex justify-center items-center"><svg width="30" height="30" viewBox="0 0 30 30"><path d="M1.200 11.200L3 9.500q.8-.6 1.600 0L22.500 23V29.500Q21.300 29.500 20.500 28.700L.9 11.900Z" fill="#0a7dc4"/><path d="M1.200 18.800L3 20.500q.8.600 1.600 0L22.500 7V.5Q21.300.5 20.500 1.300L.9 18.100Z" fill="#1088d0"/><path d="M20.500 1.300Q21.600.1 23 .6L29 3.400Q30 4 30 5V25Q30 26 29 26.600L23 29.400Q21.600 29.900 20.500 28.700 22.500 30 22.500 27.500V2.500Q22.500 0 20.500 1.300Z" fill="#2aa3f0"/></svg><div class="absolute left-[21px] top-[45px] w-2 h-1 rounded-full bg-[#9a9a9a]"></div></div>
  </div>
  <div class="ml-auto flex items-center mr-[23px]">
    <svg width="14" height="8" viewBox="0 0 14 8" fill="none" stroke="#fff" stroke-width="1.800"><path d="M1 7l6-6 6 6"/></svg>
    <div class="ml-[26px] w-[30px] text-center text-[14.500px] leading-5"><div>ENG</div><div>IN</div></div>
    <svg class="ml-[22px]" width="20" height="16" viewBox="0 0 20 16" fill="none" stroke="#fff" stroke-width="1.400"><path d="M.7 6a13 13 0 0 1 18.600 0M3.600 8.900a9 9 0 0 1 12.800 0M6.400 11.800a5 5 0 0 1 7.200 0"/><circle cx="10" cy="14" r="1.700" fill="#fff" stroke="none"/></svg>
    <svg class="ml-[10px]" width="20" height="17" viewBox="0 0 20 17" fill="none" stroke="#fff" stroke-width="1.300"><path d="M.8 6H4L9 1.800V15.200L4 11H.8Z"/><path d="M11.500 6a3.500 3.500 0 0 1 0 5M14 3.700a7 7 0 0 1 0 9.600M16.500 1.400a10.500 10.500 0 0 1 0 14.200"/></svg>
    <svg class="ml-[10px]" width="20" height="17" viewBox="0 0 20 17"><path d="M7 4.500H15.500a2 2 0 0 1 2 2V13.500a2 2 0 0 1-2 2H3a2 2 0 0 1-2-2V11" fill="none" stroke="#fff" stroke-width="1.400"/><path d="M7.500 6.200H15.500V13.800H2.800V11L7 8.500ZM18 8h2v4h-2ZM4 0L0 6.500H2.500L1.500 11 6.500 4H4Z" fill="#fff"/></svg>
    <div class="ml-[20px] w-[78px] text-right text-[14.800px] leading-5 whitespace-nowrap"><div class="tracking-[-0.3px]">20:03</div><div>25-08-2025</div></div>
  </div>
</footer>
</body>
</html>
